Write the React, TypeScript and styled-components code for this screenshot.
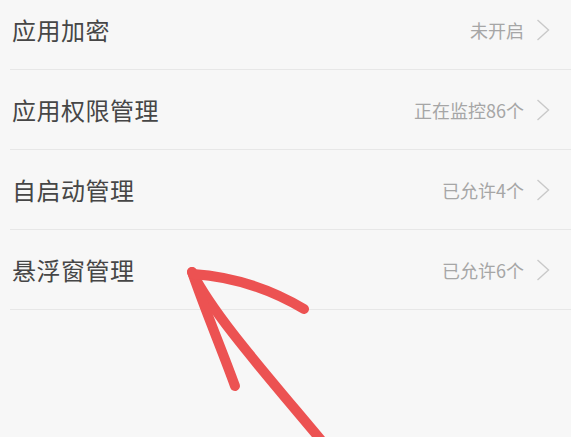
import { createGlobalStyle, styled } from "styled-components";

const GlobalStyle = createGlobalStyle`
  html, body {
    margin: 0;
    padding: 0;
    background-color: #f7f7f7;
  }
  body {
    font-family: "Noto Sans CJK SC", "Noto Sans", sans-serif;
  }
`;

const Page = styled.div`
  position: relative;
  width: 571px;
  height: 437px;
  overflow: hidden;
  background-color: #f7f7f7;
`;

const List = styled.ul`
  list-style: none;
  margin: -10px 0 0 0;
  padding: 0;
`;

const Row = styled.li`
  display: flex;
  align-items: center;
  justify-content: space-between;
  height: 79px;
  margin-left: 10px;
  padding: 0 21px 0 2px;
  border-bottom: 1px solid #e7e7e7;
`;

const Title = styled.span`
  font-size: 24px;
  color: #464646;
  letter-spacing: 0.5px;
`;

const Right = styled.div`
  display: flex;
  align-items: center;
  gap: 12px;
`;

const Status = styled.span`
  font-size: 18px;
  color: #a6a6a6;
`;

const Chevron = styled.svg`
  width: 14px;
  height: 22px;
`;

const Arrow = styled.svg`
  position: absolute;
  left: 0;
  top: 0;
  pointer-events: none;
`;

const items = [
  { title: "应用加密", status: "未开启" },
  { title: "应用权限管理", status: "正在监控86个" },
  { title: "自启动管理", status: "已允许4个" },
  { title: "悬浮窗管理", status: "已允许6个" },
];

export default function App() {
  return (
    <Page>
      <GlobalStyle />
      <List>
        {items.map((item) => (
          <Row key={item.title}>
            <Title>{item.title}</Title>
            <Right>
              <Status>{item.status}</Status>
              <Chevron viewBox="0 0 14 22">
                <path
                  d="M1.5 1 L12.5 11 L1.5 21"
                  fill="none"
                  stroke="#c9c9c9"
                  strokeWidth="1.4"
                />
              </Chevron>
            </Right>
          </Row>
        ))}
      </List>
      <Arrow width="571" height="437" viewBox="0 0 571 437">
        <g
          fill="none"
          stroke="#ec5252"
          strokeWidth="10"
          strokeLinecap="round"
          strokeLinejoin="round"
        >
          <path d="M192 272 C 214 316, 266 374, 326 446" />
          <path d="M192 272 C 205 310, 222 350, 235 386" />
          <path d="M193 274 Q 252 278, 304 309" />
        </g>
      </Arrow>
    </Page>
  );
}
